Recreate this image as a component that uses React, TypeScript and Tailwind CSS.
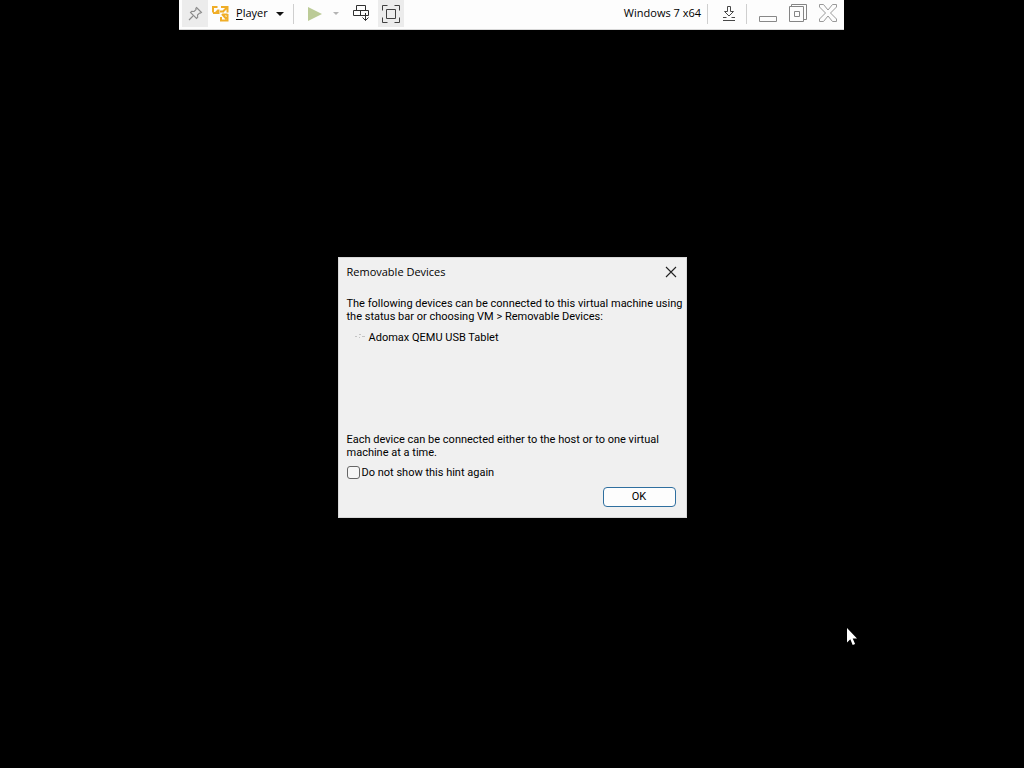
import { useState } from "react";

function PinIcon() {
  return (
    <svg width="16" height="16" viewBox="0 0 16 16" fill="none" stroke="#8c8c8c" strokeWidth="1.1">
      <path d="M9.5 1.5l5 5-1.2.7-.8-.2-2 2 .2 2.300-1.200 1.200L3.500 6.500l1.200-1.200 2.400.2 2-2-.3-1.100zM6 10L2 14" />
    </svg>
  );
}

function PlayerLogo() {
  return (
    <svg width="17" height="17" viewBox="0 0 17 17" fill="none" stroke="#f0ae28" strokeWidth="2">
      <path d="M5.500 2H1V7.500M1 8h5.500V4.500M3.500 8L6.500 5M9 2h6.500v5.500M15 2.500L11 6.500M8 6.500h4M15.500 9v6.500H9v-3.500M11 9.500h4.500M10 9l4.500 5" />
    </svg>
  );
}

function DevicesIcon() {
  return (
    <svg width="18" height="17" viewBox="0 0 18 17" fill="none" stroke="#303030" strokeWidth="1">
      <path d="M4.500 5.500v-5h9v5M1.500 5.500h15v5h-15zM8.500 5.500v5M13.500 8v7.500M10.500 12.500l3 3 3-3" />
    </svg>
  );
}

function FullScreenIcon() {
  return (
    <svg width="20" height="20" viewBox="0 0 20 20" fill="none" stroke="#404040" strokeWidth="1">
      <path d="M1.500 6.500v-5h5M13.500 1.500h5v5M18.500 13.500v5h-5M6.500 18.500h-5v-5M5.500 5.500h9v9h-9z" />
    </svg>
  );
}

function DownloadIcon() {
  return (
    <svg width="14" height="16" viewBox="0 0 14 16" fill="none" stroke="#484848" strokeWidth="1">
      <path d="M5.500 .5h3v5h3L7 10 2.500 5.500h3zM1 11.500h3.500M9.500 11.500H13M1 14.500h12" />
    </svg>
  );
}

function MinimizeIcon() {
  return (
    <svg width="20" height="20" viewBox="0 0 20 20" fill="none" stroke="#888">
      <path d="M1.500 12.500h17v5h-17z" />
    </svg>
  );
}

function RestoreIcon() {
  return (
    <svg width="20" height="20" viewBox="0 0 20 20" fill="none" stroke="#858585">
      <path d="M1.500 2.500h14v15h-14zM3.500 2.500v-2h15v15h-3M6.500 7.500h5v5h-5z" />
    </svg>
  );
}

function CloseOutlineIcon() {
  return (
    <svg width="20" height="20" viewBox="0 0 20 20" fill="none" stroke="#999">
      <path d="M1.500 .5h4L10 6l4.500-5.500h4V3L12.500 9l6 6v2.500h-4L10 12l-4.500 5.500h-4V15l6-6-6-6z" />
    </svg>
  );
}

function Toolbar() {
  return (
    <header className="mr-px flex h-[30px] w-full max-w-[665px] items-start justify-between border-b border-[#d8d8d8] bg-[#fdfdfd] pl-[3px] text-black">
      <div className="flex h-[27px] items-center">
        <button aria-label="Pin toolbar" className="flex h-full w-[26px] items-center justify-center bg-[#ececec]">
          <PinIcon />
        </button>
        <button className="flex h-full items-center gap-[7px] pl-1 pr-[9px] text-[11px]">
          <PlayerLogo />
          <span className="pr-px"><span className="underline underline-offset-2">P</span>layer</span>
          <svg width="8" height="4" viewBox="0 0 8 4"><path d="M0 0h8L4 4z" fill="#111" /></svg>
        </button>
        <span className="h-5 w-px bg-[#cfcfcf]" />
        <button aria-label="Play" className="flex h-full items-center pl-[14px]">
          <svg width="14" height="14" viewBox="0 0 14 14"><path d="M0 0l14 7-14 7z" fill="#bccb97" /></svg>
        </button>
        <button aria-label="Power options" className="flex h-full items-center px-[11px]">
          <svg width="6" height="3" viewBox="0 0 6 3"><path d="M0 0h6L3 3z" fill="#b4b4b4" /></svg>
        </button>
        <button aria-label="Send Ctrl+Alt+Del" className="flex h-full items-center pl-[2px] pr-2">
          <DevicesIcon />
        </button>
        <button aria-label="Full screen" className="flex h-full w-[26px] items-center justify-center bg-[#ececec]">
          <FullScreenIcon />
        </button>
      </div>
      <div className="flex h-[27px] items-center pr-[6px]">
        <span className="pr-[6px] text-[11px] whitespace-nowrap">Windows 7 x64</span>
        <span className="h-5 w-px bg-[#cfcfcf]" />
        <button aria-label="Downloads" className="flex h-full items-center pl-[14px] pr-[10px]">
          <DownloadIcon />
        </button>
        <span className="h-5 w-px bg-[#cfcfcf]" />
        <div className="flex gap-[10px] pl-[11px]">
          <button aria-label="Minimize"><MinimizeIcon /></button>
          <button aria-label="Restore"><RestoreIcon /></button>
          <button aria-label="Close"><CloseOutlineIcon /></button>
        </div>
      </div>
    </header>
  );
}

function DeviceDialog() {
  const [hidden, setHidden] = useState(false);
  return (
    <section role="dialog" aria-labelledby="dialog-title" className="flex w-[349px] flex-col border border-[#d9d9d9] bg-[#f0f0f0] px-2 pb-[10px] text-black">
      <div className="flex h-[29px] items-center justify-between">
        <h1 id="dialog-title" className="text-[11px]">Removable Devices</h1>
        <button aria-label="Close dialog" className="pr-px">
          <svg width="12" height="12" viewBox="0 0 12 12" stroke="#222" strokeWidth="1.1"><path d="M1 1l10 10M11 1L1 11" /></svg>
        </button>
      </div>
      <div className="flex flex-col font-['Roboto',sans-serif] text-[11px] leading-[13px]">
        <p className="pt-[10px] whitespace-nowrap">
          The following devices can be connected to this virtual machine using<br />
          the status bar or choosing VM &gt; Removable Devices:
        </p>
        <ul className="min-h-[102px] pt-2">
          <li className="flex items-center gap-1 pl-2">
            <svg width="10" height="8" viewBox="0 0 10 8" fill="#c4c4c4"><path d="M0 3h2v1H0zM4 1h2v1H4zM4 4h1v1H4zM7 3h3v1H7z" /></svg>
            Adomax QEMU USB Tablet
          </li>
        </ul>
        <p className="pt-2 whitespace-nowrap">
          Each device can be connected either to the host or to one virtual<br />
          machine at a time.
        </p>
        <label className="flex items-center gap-[2px] self-start pt-[7px]">
          <input
            type="checkbox"
            checked={hidden}
            onChange={(e) => setHidden(e.target.checked)}
            className="size-[13px] appearance-none rounded-[3px] border border-[#666] bg-[#f6f6f6] checked:bg-[#0067c0]"
          />
          Do not show this hint again
        </label>
        <button className="mt-2 mr-[2px] h-5 w-[73px] self-end rounded-[4px] border border-[#2f6f9f] bg-[#fdfdfd]">OK</button>
      </div>
    </section>
  );
}

export default function App() {
  return (
    <div className="relative flex min-h-screen flex-col items-center bg-black font-['Open_Sans',sans-serif]">
      <Toolbar />
      <main className="flex flex-1 items-center justify-center pb-6">
        <DeviceDialog />
      </main>
      <svg className="absolute top-[628px] left-[846px]" width="12" height="19" viewBox="0 0 12 19" aria-hidden="true">
        <path d="M1 0v14.500l3.300-3.200 2.400 5.700 2.400-1-2.400-5.500H11z" fill="#fff" />
      </svg>
    </div>
  );
}
